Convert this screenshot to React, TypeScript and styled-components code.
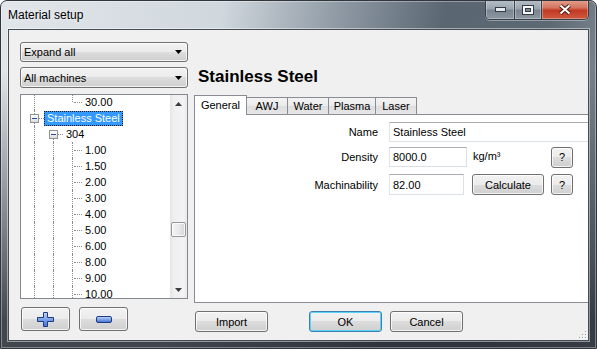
import styled, { createGlobalStyle } from "styled-components";

const GlobalStyle = createGlobalStyle`
  html, body {
    margin: 0;
    padding: 0;
    background: #ffffff;
  }
  body {
    font-family: "Liberation Sans", Arial, sans-serif;
    font-size: 11px;
    color: #000;
  }
  * {
    box-sizing: border-box;
  }
`;

const Window = styled.div`
  width: 597px;
  height: 349px;
  display: flex;
  flex-direction: column;
  padding: 0 7px 7px;
  border: 1px solid #30363c;
  border-radius: 7px 7px 0 0;
  overflow: hidden;
  background: linear-gradient(
      to bottom,
      rgba(38, 44, 51, 0) 0px,
      rgba(38, 44, 51, 0) 70px,
      rgba(38, 44, 51, 0.85) 320px
    ),
    linear-gradient(
      100deg,
      #e1e6ea 0%,
      #d0d7dd 34%,
      #8e99a4 52%,
      #5a6672 68%,
      #5c6873 84%,
      #8c97a1 100%
    );
  box-shadow: inset 0 0 0 1px rgba(255, 255, 255, 0.35);
`;

const TitleBar = styled.div`
  height: 28px;
  display: flex;
  justify-content: space-between;
  align-items: flex-start;
`;

const Caption = styled.span`
  padding-top: 7px;
  font-size: 12px;
  line-height: 15px;
  color: #000;
  text-shadow: 0 0 6px rgba(255, 255, 255, 0.9);
`;

const CaptionButtons = styled.div`
  display: flex;
  margin-top: -1px;
  height: 20px;
  border: 1px solid #3a4047;
  border-top: none;
  border-radius: 0 0 5px 5px;
  overflow: hidden;
  box-shadow: 0 1px 0 rgba(255, 255, 255, 0.35);
`;

const CaptionButton = styled.div<{ $w: number; $close?: boolean }>`
  width: ${(p) => p.$w}px;
  height: 100%;
  display: flex;
  align-items: center;
  justify-content: center;
  border-left: ${(p) => (p.$w === 27 || p.$close ? "1px solid #3a4047" : "none")};
  box-shadow: inset 0 0 0 1px rgba(255, 255, 255, 0.3);
  background: ${(p) =>
    p.$close
      ? "linear-gradient(to bottom, #e3a191 0%, #d47560 40%, #c23a22 55%, #cf5a41 100%)"
      : "linear-gradient(to bottom, #b7c0c8 0%, #9ba5ae 45%, #7a8591 55%, #8c97a2 100%)"};
`;

const Client = styled.div`
  flex: 1;
  position: relative;
  display: flex;
  gap: 6px;
  padding: 12px 0 0 11px;
  background: #f0f0f0;
  border: 1px solid #454c54;
  box-shadow: 0 0 0 1px rgba(255, 255, 255, 0.45);
  overflow: hidden;
`;

const LeftColumn = styled.div`
  width: 168px;
  flex: none;
  display: flex;
  flex-direction: column;
`;

const RightColumn = styled.div`
  width: 430px;
  flex: none;
  display: flex;
  flex-direction: column;
  padding-top: 25px;
`;

const Combo = styled.div<{ $h: number; $gap?: number }>`
  height: ${(p) => p.$h}px;
  margin-top: ${(p) => p.$gap ?? 0}px;
  display: flex;
  align-items: center;
  justify-content: space-between;
  padding: 0 5px 0 3px;
  border: 1px solid #707070;
  border-radius: 3px;
  background: linear-gradient(to bottom, #f2f2f2 0%, #ebebeb 50%, #dddddd 50%, #cfcfcf 100%);
  box-shadow: inset 0 0 0 1px rgba(255, 255, 255, 0.75);
`;

const Tree = styled.div`
  height: 205px;
  margin-top: 6px;
  display: flex;
  background: #fff;
  border: 1px solid #828790;
`;

const TreeList = styled.div`
  flex: 1;
  overflow: hidden;
  padding-left: 4px;
`;

const TreeRow = styled.div`
  height: 16px;
  display: flex;
  align-items: center;
  &:first-child {
    margin-top: -1px;
  }
`;

type Line = "none" | "full" | "top" | "bottom";

const lineTop = (l: Line) => (l === "bottom" ? "8px" : "0");
const lineBottom = (l: Line) => (l === "top" ? "8px" : "0");

const GuideCell = styled.span<{ $line: Line; $branch?: boolean }>`
  position: relative;
  width: 19px;
  height: 16px;
  flex: none;
  &::before {
    content: "";
    display: ${(p) => (p.$line === "none" ? "none" : "block")};
    position: absolute;
    left: 9px;
    top: ${(p) => lineTop(p.$line)};
    bottom: ${(p) => lineBottom(p.$line)};
    border-left: 1px dotted #8c8c8c;
  }
  &::after {
    content: "";
    display: ${(p) => (p.$branch ? "block" : "none")};
    position: absolute;
    left: 11px;
    right: 0;
    top: 8px;
    border-top: 1px dotted #8c8c8c;
  }
`;

const ExpandBox = styled.span`
  position: absolute;
  left: 5px;
  top: 4px;
  width: 9px;
  height: 9px;
  z-index: 1;
  display: flex;
  align-items: center;
  justify-content: center;
  border: 1px solid #919191;
  background: linear-gradient(to bottom, #ffffff, #dcdcdc);
  &::after {
    content: "";
    width: 5px;
    height: 1px;
    background: #2c4a9a;
  }
`;

const TreeLabel = styled.span<{ $selected?: boolean }>`
  height: 15px;
  line-height: 13px;
  padding: 0 2px;
  white-space: nowrap;
  border: 1px dotted ${(p) => (p.$selected ? "#1a1a1a" : "transparent")};
  background: ${(p) => (p.$selected ? "#3399ff" : "transparent")};
  color: ${(p) => (p.$selected ? "#fff" : "#000")};
`;

const ScrollBar = styled.div`
  width: 17px;
  flex: none;
  display: flex;
  flex-direction: column;
  background: linear-gradient(to right, #e4e4e4 0%, #efefef 20%, #f3f3f3 80%, #e9e9e9 100%);
`;

const ScrollArrow = styled.div`
  height: 17px;
  display: flex;
  align-items: center;
  justify-content: center;
`;

const ScrollTrack = styled.div`
  flex: 1;
  padding: 0 1px;
`;

const Thumb = styled.div<{ $top: number }>`
  margin-top: ${(p) => p.$top}px;
  height: 15px;
  border: 1px solid #979797;
  border-radius: 2px;
  background: linear-gradient(to right, #f4f4f4 0%, #e9e9e9 50%, #d6d6d6 100%);
  box-shadow: inset 0 0 0 1px rgba(255, 255, 255, 0.8);
`;

const ButtonBase = styled.button`
  font-family: "Liberation Sans", Arial, sans-serif;
  font-size: 11px;
  color: #000;
  padding: 0;
  border: 1px solid #707070;
  border-radius: 3px;
  background: linear-gradient(to bottom, #f2f2f2 0%, #ebebeb 50%, #dddddd 50%, #cfcfcf 100%);
  box-shadow: inset 0 0 0 1px rgba(255, 255, 255, 0.75);
  display: flex;
  align-items: center;
  justify-content: center;
`;

const IconRow = styled.div`
  display: flex;
  gap: 9px;
  margin-top: 8px;
  padding-left: 1px;
`;

const IconButton = styled(ButtonBase)`
  width: 49px;
  height: 24px;
`;

const Heading = styled.div`
  height: 20px;
  line-height: 20px;
  padding-left: 4px;
  font-size: 17px;
  font-weight: bold;
`;

const TabStrip = styled.div`
  display: flex;
  align-items: flex-start;
  height: 20px;
  margin-top: 8px;
  position: relative;
  z-index: 1;
`;

const Tab = styled.div<{ $w: number; $active?: boolean }>`
  width: ${(p) => p.$w}px;
  height: ${(p) => (p.$active ? 20 : 17)}px;
  margin-top: ${(p) => (p.$active ? 0 : 2)}px;
  margin-left: -1px;
  display: flex;
  align-items: center;
  justify-content: center;
  padding-bottom: ${(p) => (p.$active ? 2 : 0)}px;
  border: 1px solid #898c95;
  border-bottom: none;
  background: ${(p) =>
    p.$active ? "#ffffff" : "linear-gradient(to bottom, #f3f3f3 0%, #ebebeb 50%, #dedede 50%, #e6e6e6 100%)"};
  &:first-child {
    margin-left: 0;
  }
`;

const Panel = styled.div`
  height: 189px;
  margin-top: -1px;
  padding-top: 7px;
  background: #fff;
  border: 1px solid #898c95;
`;

const FormRow = styled.div<{ $h: number; $gap?: number }>`
  display: flex;
  align-items: center;
  height: ${(p) => p.$h}px;
  margin-top: ${(p) => p.$gap ?? 0}px;
`;

const FieldLabel = styled.span`
  width: 183px;
  margin-right: 11px;
  text-align: right;
`;

const TextBox = styled.input<{ $w: number }>`
  width: ${(p) => p.$w}px;
  height: 100%;
  margin: 0;
  padding: 0 3px;
  font-family: "Liberation Sans", Arial, sans-serif;
  font-size: 11px;
  color: #000;
  background: #fff;
  border: 1px solid #dbdfe6;
  border-top-color: #abadb3;
  border-left-color: #e2e3ea;
  outline: none;
`;

const Unit = styled.span`
  width: 78px;
  margin-left: 6px;
  align-self: flex-start;
  padding-top: 3px;
`;

const CalcButton = styled(ButtonBase)`
  width: 72px;
  height: 21px;
  margin-left: 8px;
`;

const HelpButton = styled(ButtonBase)<{ $gap: number }>`
  width: 22px;
  height: 21px;
  margin-left: ${(p) => p.$gap}px;
`;

const DialogButtons = styled.div`
  display: flex;
  margin-top: 8px;
  padding-left: 1px;
`;

const DialogButton = styled(ButtonBase)<{ $gap: number; $default?: boolean }>`
  width: 73px;
  height: 21px;
  margin-left: ${(p) => p.$gap}px;
  border-color: ${(p) => (p.$default ? "#3c7fb1" : "#707070")};
  box-shadow: ${(p) =>
    p.$default ? "inset 0 0 0 1px #5ed2f6" : "inset 0 0 0 1px rgba(255, 255, 255, 0.75)"};
`;

const Grip = styled.div`
  position: absolute;
  right: 1px;
  bottom: 1px;
  width: 10px;
  height: 10px;
`;

interface Guide {
  line: Line;
  branch?: boolean;
  box?: boolean;
}

interface TreeItem {
  label: string;
  guides: Guide[];
  selected?: boolean;
}

const full: Guide = { line: "full" };

const thicknesses = ["1.00", "1.50", "2.00", "3.00", "4.00", "5.00", "6.00", "8.00", "9.00", "10.00"];

const treeItems: TreeItem[] = [
  { label: "30.00", guides: [full, { line: "none" }, { line: "top", branch: true }] },
  { label: "Stainless Steel", guides: [{ line: "full", branch: true, box: true }], selected: true },
  { label: "304", guides: [full, { line: "bottom", branch: true, box: true }] },
  ...thicknesses.map((t) => ({ label: t, guides: [full, full, { line: "full" as Line, branch: true }] })),
];

const tabs = [
  { label: "General", w: 53, active: true },
  { label: "AWJ", w: 42 },
  { label: "Water", w: 42 },
  { label: "Plasma", w: 48 },
  { label: "Laser", w: 42 },
];

const DropArrow = () => (
  <svg width="7" height="4" viewBox="0 0 7 4">
    <polygon points="0,0 7,0 3.5,4" fill="#000" />
  </svg>
);

const SmallArrow = ({ up }: { up?: boolean }) => (
  <svg width="7" height="4" viewBox="0 0 7 4">
    <polygon points={up ? "3.5,0 7,4 0,4" : "0,0 7,0 3.5,4"} fill="#3c3c3c" />
  </svg>
);

const PlusIcon = () => (
  <svg width="17" height="15" viewBox="0 0 17 15">
    <defs>
      <linearGradient id="plusFill" x1="0" y1="0" x2="0" y2="1">
        <stop offset="0" stopColor="#c5d8f7" />
        <stop offset="0.5" stopColor="#7ea3e6" />
        <stop offset="1" stopColor="#3f6ed0" />
      </linearGradient>
    </defs>
    <path
      d="M6.5 0.5 H10.5 V5.5 H16.5 V9.5 H10.5 V14.5 H6.5 V9.5 H0.5 V5.5 H6.5 Z"
      fill="url(#plusFill)"
      stroke="#1d3c86"
      strokeLinejoin="round"
    />
  </svg>
);

const MinusIcon = () => (
  <svg width="16" height="7" viewBox="0 0 16 7">
    <defs>
      <linearGradient id="minusFill" x1="0" y1="0" x2="0" y2="1">
        <stop offset="0" stopColor="#c5d8f7" />
        <stop offset="0.5" stopColor="#7ea3e6" />
        <stop offset="1" stopColor="#3f6ed0" />
      </linearGradient>
    </defs>
    <rect x="0.5" y="0.5" width="15" height="6" rx="1.5" fill="url(#minusFill)" stroke="#1d3c86" />
  </svg>
);

const MinimizeGlyph = () => (
  <svg width="11" height="5" viewBox="0 0 11 5">
    <rect x="0.5" y="0.5" width="10" height="4" fill="#e6eaee" stroke="#343b43" />
  </svg>
);

const MaximizeGlyph = () => (
  <svg width="12" height="10" viewBox="0 0 12 10">
    <rect x="0.5" y="0.5" width="11" height="9" fill="#f4f6f8" stroke="#343b43" />
    <rect x="3.5" y="3.5" width="5" height="3" fill="#7e8994" stroke="#343b43" />
  </svg>
);

const CloseGlyph = () => (
  <svg width="14" height="11" viewBox="0 0 14 11">
    <path d="M2.5 1.5 L11.5 9.5 M11.5 1.5 L2.5 9.5" stroke="#4a1a12" strokeWidth="4" />
    <path d="M2.5 1.5 L11.5 9.5 M11.5 1.5 L2.5 9.5" stroke="#ffffff" strokeWidth="2" />
  </svg>
);

const GripDots = () => (
  <svg width="10" height="10" viewBox="0 0 10 10">
    {[
      [8, 2],
      [5, 5],
      [8, 5],
      [2, 8],
      [5, 8],
      [8, 8],
    ].map(([x, y]) => (
      <g key={`${x}-${y}`}>
        <rect x={x} y={y} width="1" height="1" fill="#a0a0a0" />
        <rect x={x + 1} y={y + 1} width="1" height="1" fill="#ffffff" />
      </g>
    ))}
  </svg>
);

export default function App() {
  return (
    <>
      <GlobalStyle />
      <Window>
        <TitleBar>
          <Caption>Material setup</Caption>
          <CaptionButtons>
            <CaptionButton $w={28}>
              <MinimizeGlyph />
            </CaptionButton>
            <CaptionButton $w={27}>
              <MaximizeGlyph />
            </CaptionButton>
            <CaptionButton $w={47} $close>
              <CloseGlyph />
            </CaptionButton>
          </CaptionButtons>
        </TitleBar>

        <Client>
          <LeftColumn>
            <Combo $h={20}>
              <span>Expand all</span>
              <DropArrow />
            </Combo>
            <Combo $h={21} $gap={5}>
              <span>All machines</span>
              <DropArrow />
            </Combo>
            <Tree>
              <TreeList>
                {treeItems.map((item, i) => (
                  <TreeRow key={i}>
                    {item.guides.map((g, j) => (
                      <GuideCell key={j} $line={g.line} $branch={g.branch}>
                        {g.box && <ExpandBox />}
                      </GuideCell>
                    ))}
                    <TreeLabel $selected={item.selected}>{item.label}</TreeLabel>
                  </TreeRow>
                ))}
              </TreeList>
              <ScrollBar>
                <ScrollArrow>
                  <SmallArrow up />
                </ScrollArrow>
                <ScrollTrack>
                  <Thumb $top={110} />
                </ScrollTrack>
                <ScrollArrow>
                  <SmallArrow />
                </ScrollArrow>
              </ScrollBar>
            </Tree>
            <IconRow>
              <IconButton>
                <PlusIcon />
              </IconButton>
              <IconButton>
                <MinusIcon />
              </IconButton>
            </IconRow>
          </LeftColumn>

          <RightColumn>
            <Heading>Stainless Steel</Heading>
            <TabStrip>
              {tabs.map((t) => (
                <Tab key={t.label} $w={t.w} $active={t.active}>
                  {t.label}
                </Tab>
              ))}
            </TabStrip>
            <Panel>
              <FormRow $h={20}>
                <FieldLabel>Name</FieldLabel>
                <TextBox $w={230} defaultValue="Stainless Steel" />
              </FormRow>
              <FormRow $h={20} $gap={5}>
                <FieldLabel>Density</FieldLabel>
                <TextBox $w={78} defaultValue="8000.0" />
                <Unit>kg/m³</Unit>
                <HelpButton $gap={0}>?</HelpButton>
              </FormRow>
              <FormRow $h={21} $gap={7}>
                <FieldLabel>Machinability</FieldLabel>
                <TextBox $w={75} defaultValue="82.00" />
                <CalcButton>Calculate</CalcButton>
                <HelpButton $gap={7}>?</HelpButton>
              </FormRow>
            </Panel>
            <DialogButtons>
              <DialogButton $gap={0}>Import</DialogButton>
              <DialogButton $gap={41} $default>
                OK
              </DialogButton>
              <DialogButton $gap={8}>Cancel</DialogButton>
            </DialogButtons>
          </RightColumn>

          <Grip>
            <GripDots />
          </Grip>
        </Client>
      </Window>
    </>
  );
}
